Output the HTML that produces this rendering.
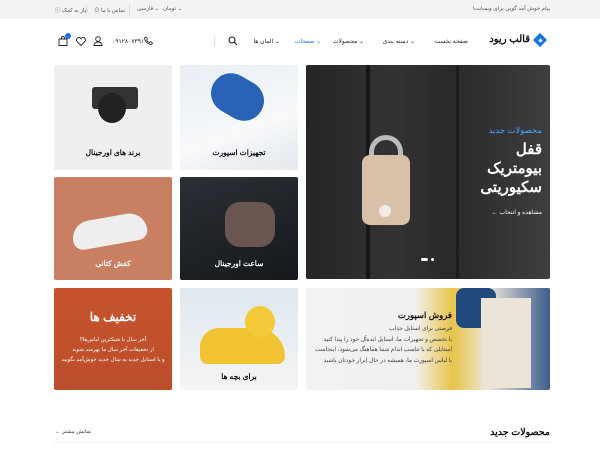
<!DOCTYPE html>
<html dir="rtl"><head><meta charset="utf-8"><style>
*{margin:0;padding:0;box-sizing:border-box}
body{width:600px;height:450px;overflow:hidden;background:#fff;font-family:"Liberation Sans","Noto Sans CJK SC",sans-serif;position:relative;color:#222}
.a{position:absolute}
.t{position:absolute;font-size:6px;color:#555;white-space:nowrap}
.tile{position:absolute;border-radius:2px;overflow:hidden}
.cap{position:absolute;left:0;right:0;text-align:center;font-size:7.5px;font-weight:bold;color:#111}
</style></head><body>
<div class="a" style="left:0;top:0;width:600px;height:19px;background:#f3f3f4"></div>
<div class="t" style="right:50px;top:6px;font-size:5.5px">پیام خوش آمد گویی برای وبسایت!</div>
<div class="t" style="left:55px;top:6px;direction:rtl;font-size:5.5px">نیاز به کمک ⓘ</div>
<div class="a" style="left:86px;top:4px;width:1px;height:11px;background:#ddd"></div>
<div class="t" style="left:94px;top:6px;font-size:5.5px">تماس با ما ⊙</div>
<div class="a" style="left:129px;top:4px;width:1px;height:11px;background:#ddd"></div>
<div class="t" style="left:137px;top:6px;font-size:5.5px">⌄ فارسی</div>
<div class="t" style="left:163px;top:6px;font-size:5.5px">⌄ تومان</div>
<!-- header -->
<div class="a" style="left:535px;top:35px;width:10px;height:10px;background:#1a73e8;transform:rotate(45deg)"></div>
<div class="a" style="left:539px;top:39px;width:3px;height:3px;background:#fff;transform:rotate(45deg)"></div>
<div class="t" style="right:70px;top:34px;font-size:10px;font-weight:bold;color:#111">قالب ریود</div>
<div class="t" style="right:132px;top:38px;color:#222">صفحه نخست</div>
<div class="t" style="right:185px;top:38px;color:#222">⌄ دسته بندی</div>
<div class="t" style="right:236px;top:38px;color:#222">⌄ محصولات</div>
<div class="t" style="right:279px;top:38px;color:#1a73e8">⌄ صفحات</div>
<div class="t" style="right:320px;top:38px;color:#222">⌄ المان ها</div>
<div class="a" style="left:214px;top:36px;width:1px;height:10px;background:#ddd"></div>
<svg class="a" style="left:228px;top:36px" width="10" height="10" viewBox="0 0 10 10"><circle cx="4" cy="4" r="3" fill="none" stroke="#222" stroke-width="1.1"/><path d="M6.3 6.3L9 9" stroke="#222" stroke-width="1.2"/></svg>
<div class="t" style="left:112px;top:38px;color:#222">۰۹۱۲۸۰۷۳۹۱</div>
<svg class="a" style="left:144px;top:36px" width="9" height="9" viewBox="0 0 10 10"><path d="M2 1l2 2-1 1.5a6 6 0 003 3L7.5 6l2 2-1.5 1.5C4 9 1 6 .5 2z" fill="none" stroke="#222" stroke-width=".9"/></svg>
<svg class="a" style="left:93px;top:36px" width="10" height="10" viewBox="0 0 10 10"><circle cx="5" cy="3" r="2.3" fill="none" stroke="#222" stroke-width=".9"/><path d="M1 9.5a4 3.5 0 018 0z" fill="none" stroke="#222" stroke-width=".9"/></svg>
<svg class="a" style="left:76px;top:37px" width="10" height="9" viewBox="0 0 10 9"><path d="M5 8.5L1 4.5A2.3 2.3 0 015 1.6 2.3 2.3 0 019 4.5z" fill="none" stroke="#222" stroke-width=".9"/></svg>
<svg class="a" style="left:58px;top:36px" width="10" height="10" viewBox="0 0 10 10"><path d="M1 3h8v6.5H1z M3.5 3V2a1.5 1.5 0 013 0v1" fill="none" stroke="#222" stroke-width=".9"/></svg>
<div class="a" style="left:65px;top:33px;width:6px;height:6px;border-radius:50%;background:#1a73e8"></div>
<!-- hero -->
<div class="tile" style="left:306px;top:65px;width:244px;height:214px;background:linear-gradient(90deg,#252527 0%,#333335 35%,#29292b 60%,#3e3e40 100%)">
<div class="a" style="left:60px;top:0;width:4px;height:214px;background:#161618"></div>
<div class="a" style="left:150px;top:0;width:3px;height:214px;background:#1c1c1e"></div>
<div class="a" style="left:63px;top:70px;width:34px;height:26px;border:5px solid #bbb;border-bottom:none;border-radius:17px 17px 0 0"></div>
<div class="a" style="left:56px;top:90px;width:48px;height:70px;background:#d9c0a8;border-radius:8px"></div>
<div class="a" style="left:73px;top:140px;width:12px;height:12px;border-radius:50%;background:#f2ebe3"></div>
<div class="t" style="right:8px;top:60px;color:#4aa3ff;font-size:8.5px">محصولات جدید</div>
<div class="a" style="right:8px;top:75px;color:#fff;font-size:15px;font-weight:bold;line-height:19px;text-align:right">قفل<br>بیومتریک<br>سکیوریتی</div>
<div class="t" style="right:8px;top:144px;color:#fff;font-size:6px">مشاهده و انتخاب ←</div>
<div class="a" style="left:115px;top:193px;width:7px;height:3px;border-radius:2px;background:#fff"></div>
<div class="a" style="left:125px;top:193px;width:3px;height:3px;border-radius:50%;background:#fff"></div>
</div>
<!-- tiles -->
<div class="tile" style="left:54px;top:65px;width:118px;height:105px;background:#efefef">
<div class="a" style="left:38px;top:22px;width:46px;height:22px;background:#333;border-radius:3px"></div>
<div class="a" style="left:44px;top:28px;width:28px;height:30px;background:#222;border-radius:50%"></div>
<div class="cap" style="top:83px">برند های اورجینال</div></div>
<div class="tile" style="left:180px;top:65px;width:118px;height:105px;background:linear-gradient(160deg,#e8eef4,#f7f9fb 60%,#e4e8ec)">
<div class="a" style="left:30px;top:12px;width:55px;height:40px;background:#2a62b8;border-radius:20px;transform:rotate(30deg)"></div>
<div class="cap" style="top:83px">تجهیزات اسپورت</div></div>
<div class="tile" style="left:54px;top:177px;width:118px;height:103px;background:#c98062">
<div class="a" style="left:18px;top:40px;width:75px;height:28px;background:#eee;border-radius:18px 18px 10px 10px;transform:rotate(-10deg)"></div>
<div class="cap" style="top:82px;color:#fff">کفش کتانی</div></div>
<div class="tile" style="left:180px;top:177px;width:118px;height:103px;background:linear-gradient(160deg,#2b3036,#15181c)">
<div class="a" style="left:45px;top:25px;width:50px;height:45px;background:#6a5650;border-radius:15px"></div>
<div class="cap" style="top:82px;color:#fff">ساعت اورجینال</div></div>
<div class="tile" style="left:54px;top:288px;width:118px;height:102px;background:linear-gradient(180deg,#c7532e,#bc4d2b)">
<div class="cap" style="top:22px;color:#fff;font-size:12px">تخفیف ها</div>
<div class="cap" style="top:47px;color:#fff;font-size:5.5px;font-weight:normal;line-height:10px">آخر سال با شیکترین لباس‌ها!!<br>از تخفیفات آخر سال ما بهرمند شوید<br>و با استایل جدید به سال جدید خوش‌آمد بگویید</div></div>
<div class="tile" style="left:180px;top:288px;width:118px;height:102px;background:linear-gradient(180deg,#dfe8f0,#f4f4f4)">
<div class="a" style="left:20px;top:40px;width:85px;height:36px;background:#f1c232;border-radius:20px 30px 8px 8px"></div>
<div class="a" style="left:65px;top:18px;width:30px;height:32px;background:#f3c93a;border-radius:50%"></div>
<div class="cap" style="top:84px">برای بچه ها</div></div>
<div class="tile" style="left:306px;top:288px;width:244px;height:102px;background:linear-gradient(90deg,#f2f2f2 0%,#f0f0ee 45%,#e8c44a 60%,#ece6da 75%,#3c5c8c 100%)">
<div class="a" style="left:150px;top:0;width:40px;height:40px;background:#234a7e;border-radius:8px"></div>
<div class="a" style="left:175px;top:10px;width:50px;height:90px;background:#ebe4d6"></div>
<div class="t" style="right:98px;top:22px;color:#111;font-size:8.5px;font-weight:bold">فروش اسپورت</div>
<div class="a" style="right:98px;top:36px;font-size:5.8px;line-height:10.5px;color:#444;text-align:right">فرصتی برای استایل جذاب<br>با تخصص و تجهیزات ما، استایل ایده‌آل خود را پیدا کنید<br>استایلی که با تناسب اندام شما هماهنگ می‌شود، اینجاست<br>با لباس اسپورت ما، همیشه در حال ابراز خودتان باشید</div></div>
<!-- bottom -->
<div class="t" style="right:50px;top:427px;font-size:9.5px;font-weight:bold;color:#111">محصولات جدید</div>
<div class="t" style="left:55px;top:429px;font-size:5.5px;color:#333">نمایش بیشتر ←</div>
<div class="a" style="left:54px;top:442px;width:496px;height:1px;background:#eee"></div>
</body></html>
